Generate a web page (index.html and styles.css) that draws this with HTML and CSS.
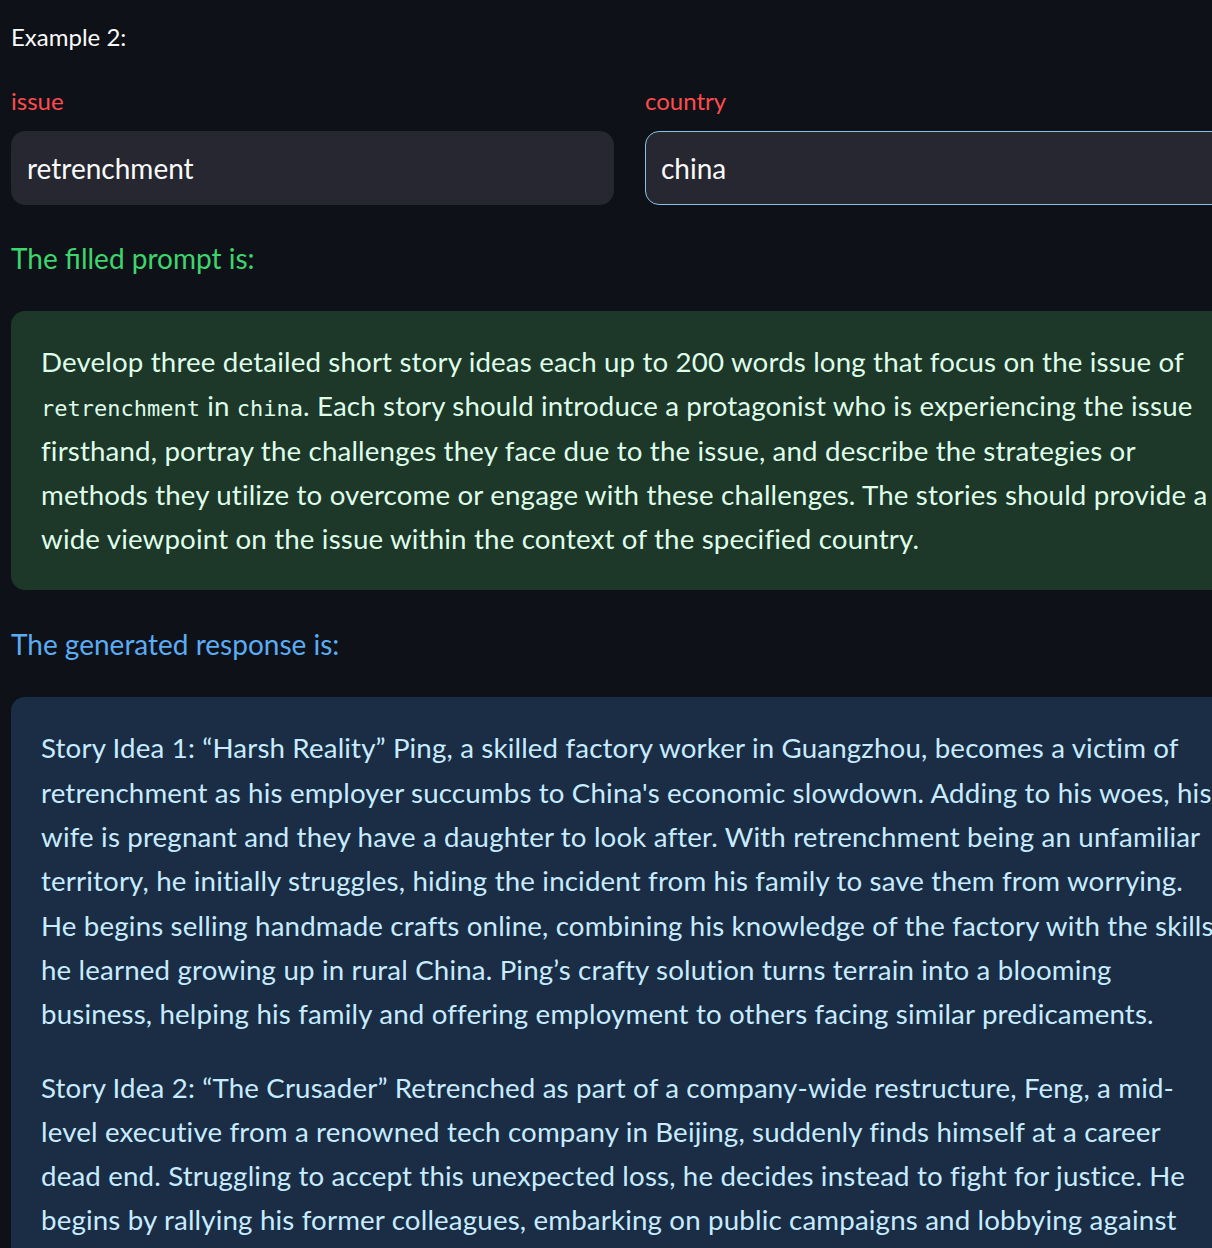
FILE: index.html
```html
<!DOCTYPE html>
<html>
<head>
<meta charset="utf-8">
<link rel="stylesheet" href="styles.css">
</head>
<body>
<div class="page">
  <p class="example">Example 2:</p>
  <div class="fields">
    <div class="field">
      <div class="label">issue</div>
      <div class="input">retrenchment</div>
    </div>
    <div class="field">
      <div class="label">country</div>
      <div class="input focused">china</div>
    </div>
  </div>
  <p class="heading green">The filled prompt is:</p>
  <div class="alert success">
    <p>Develop three detailed short story ideas each up to 200 words long that focus on the issue of <code>retrenchment</code> in <code>china</code>. Each story should introduce a protagonist who is experiencing the issue firsthand, portray the challenges they face due to the issue, and describe the strategies or methods they utilize to overcome or engage with these challenges. The stories should provide a wide viewpoint on the issue within the context of the specified country.</p>
  </div>
  <p class="heading blue">The generated response is:</p>
  <div class="alert info">
    <p>Story Idea 1: “Harsh Reality” Ping, a skilled factory worker in Guangzhou, becomes a victim of retrenchment as his employer succumbs to China's economic slowdown. Adding to his woes, his wife is pregnant and they have a daughter to look after. With retrenchment being an unfamiliar territory, he initially struggles, hiding the incident from his family to save them from worrying. He begins selling handmade crafts online, combining his knowledge of the factory with the skills he learned growing up in rural China. Ping’s crafty solution turns terrain into a blooming business, helping his family and offering employment to others facing similar predicaments.</p>
    <p>Story Idea 2: “The Crusader” Retrenched as part of a company-wide restructure, Feng, a mid-level executive from a renowned tech company in Beijing, suddenly finds himself at a career dead end. Struggling to accept this unexpected loss, he decides instead to fight for justice. He begins by rallying his former colleagues, embarking on public campaigns and lobbying against unfair retrenchment practices.</p>
  </div>
</div>
</body>
</html>
```
FILE: styles.css
```css
html, body {
  margin: 0;
  padding: 0;
  background: #0e1117;
  overflow: hidden;
}
body {
  width: 1212px;
  height: 1248px;
  font-family: Lato, "Noto Sans", sans-serif;
  color: #fafafa;
}
.page {
  width: 1237px;
  padding-left: 11px;
}
.example {
  margin: 18px 0 0;
  font-size: 24px;
  line-height: 38px;
}
.fields {
  display: grid;
  grid-template-columns: 603px 603px;
  column-gap: 31px;
  margin-top: 26px;
}
.label {
  color: #ff4b4b;
  font-size: 24px;
  line-height: 38px;
  margin-bottom: 11px;
}
.input {
  box-sizing: border-box;
  height: 74px;
  background: #262730;
  border: 1px solid #262730;
  border-radius: 14px;
  padding: 0 15px;
  font-size: 28px;
  line-height: 72px;
  color: #fafafa;
}
.input.focused {
  border-color: #86c4e4;
}
.heading {
  font-size: 28px;
  line-height: 44px;
  margin: 31px 0 31px;
}
.heading.green { color: #3dd56d; }
.heading.blue { color: #5aacf5; margin-top: 32px; }
.alert {
  border-radius: 14px;
  padding: 29px 26px 29px 30px;
  font-size: 27.7px;
  line-height: 44.3px;
  letter-spacing: 0.15px;
}
.alert p { margin: 0; }
.alert p + p { margin-top: 29px; }
.success {
  background: #1d3729;
  color: #dffde9;
}
.info {
  background: #1a2d44;
  color: #c7ebff;
}
code {
  font-family: "DejaVu Sans Mono", monospace;
  font-size: 22px;
  line-height: 1;
  letter-spacing: 0;
}
```
